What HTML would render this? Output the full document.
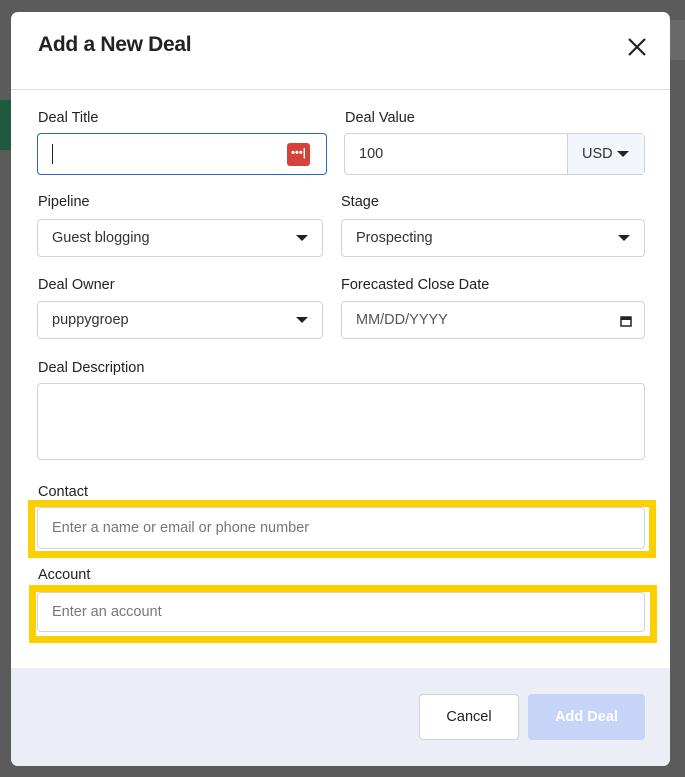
<!DOCTYPE html>
<html><head><style>
*{box-sizing:border-box;margin:0;padding:0}
body{width:685px;height:777px;background:#5b5b5b;font-family:"Liberation Sans",sans-serif;position:relative;overflow:hidden;color:#222}
.a{position:absolute}
.m{left:11px;top:12px;width:659px;height:754px;background:#fff;border-radius:7px;overflow:hidden}
h1{position:absolute;left:38px;top:33px;font-size:21px;font-weight:bold;color:#222;letter-spacing:-0.3px}
.lbl{position:absolute;font-size:14.5px;color:#222}
.in{position:absolute;border:1px solid #cfd3da;border-radius:4px;background:#fff;font-size:14.5px;color:#333;padding-left:14px;display:flex;align-items:center}
.caret{position:absolute;right:14px;top:50%;margin-top:-3px;width:0;height:0;border-left:6px solid transparent;border-right:6px solid transparent;border-top:6px solid #222}
.ph{color:#777}
.y{position:absolute;border:7px solid #fccf00}
</style></head><body>
<div class="a" style="left:0;top:100px;width:11px;height:50px;background:#1d5a40"></div>
<div class="a" style="left:670px;top:20px;width:15px;height:40px;background:#6a6a6a"></div>
<div class="a m">
<div class="a" style="left:0;top:77px;width:659px;height:1px;background:#d8dbe0"></div>
<div class="a" style="left:0;top:656px;width:659px;height:98px;background:#ebeef5"></div>
</div>
<h1>Add a New Deal</h1>
<svg class="a" style="left:627px;top:37px" width="20" height="20" viewBox="0 0 20 20"><path d="M2 2L18 18M18 2L2 18" stroke="#222" stroke-width="2.2"/></svg>

<div class="lbl" style="left:38px;top:110px">Deal Title</div>
<div class="in" style="left:37px;top:133px;width:290px;height:42px;border:1.5px solid #2465c7"><div style="width:1px;height:20px;background:#222"></div>
<div class="a" style="right:16px;top:9px;width:23px;height:23px;background:#d6413a;border-radius:3px;color:#fff;font-size:11px;font-weight:bold;text-align:center;line-height:20px">•••|</div></div>
<div class="lbl" style="left:345px;top:110px">Deal Value</div>
<div class="in" style="left:344px;top:133px;width:301px;height:42px">100
<div class="a" style="right:0;top:0;width:77px;height:40px;background:#f2f5fb;border-left:1px solid #cfd3da;padding-left:14px;line-height:40px">USD<span class="caret" style="right:15px"></span></div></div>

<div class="lbl" style="left:38px;top:194px">Pipeline</div>
<div class="in" style="left:37px;top:219px;width:286px;height:38px">Guest blogging<span class="caret"></span></div>
<div class="lbl" style="left:341px;top:194px">Stage</div>
<div class="in" style="left:341px;top:219px;width:304px;height:38px">Prospecting<span class="caret"></span></div>

<div class="lbl" style="left:38px;top:277px">Deal Owner</div>
<div class="in" style="left:37px;top:301px;width:286px;height:38px">puppygroep<span class="caret"></span></div>
<div class="lbl" style="left:341px;top:277px">Forecasted Close Date</div>
<div class="in" style="left:341px;top:301px;width:304px;height:38px"><span class="ph" style="color:#555">MM/DD/YYYY</span>
<svg class="a" style="right:12px;top:13px" width="12" height="12" viewBox="0 0 12 12"><rect x="1" y="2" width="10" height="9" fill="none" stroke="#222" stroke-width="1.5"/><rect x="1" y="2" width="10" height="3" fill="#222"/></svg></div>

<div class="lbl" style="left:38px;top:360px">Deal Description</div>
<div class="in" style="left:37px;top:383px;width:608px;height:77px"></div>

<div class="lbl" style="left:38px;top:484px">Contact</div>
<div class="y" style="left:28px;top:500px;width:628px;height:58px"></div>
<div class="in" style="left:37px;top:507px;width:608px;height:42px"><span class="ph">Enter a name or email or phone number</span></div>
<div class="lbl" style="left:38px;top:567px">Account</div>
<div class="y" style="left:29px;top:585px;width:628px;height:58px"></div>
<div class="in" style="left:37px;top:592px;width:608px;height:40px"><span class="ph">Enter an account</span></div>

<div class="a" style="left:419px;top:694px;width:100px;height:46px;background:#fff;border:1px solid #cfd3da;border-radius:4px;font-size:14.5px;text-align:center;line-height:44px">Cancel</div>
<div class="a" style="left:528px;top:694px;width:117px;height:46px;background:#c6d4f8;border-radius:4px;font-size:14.5px;font-weight:bold;color:#fff;text-align:center;line-height:46px">Add Deal</div>
</body></html>
